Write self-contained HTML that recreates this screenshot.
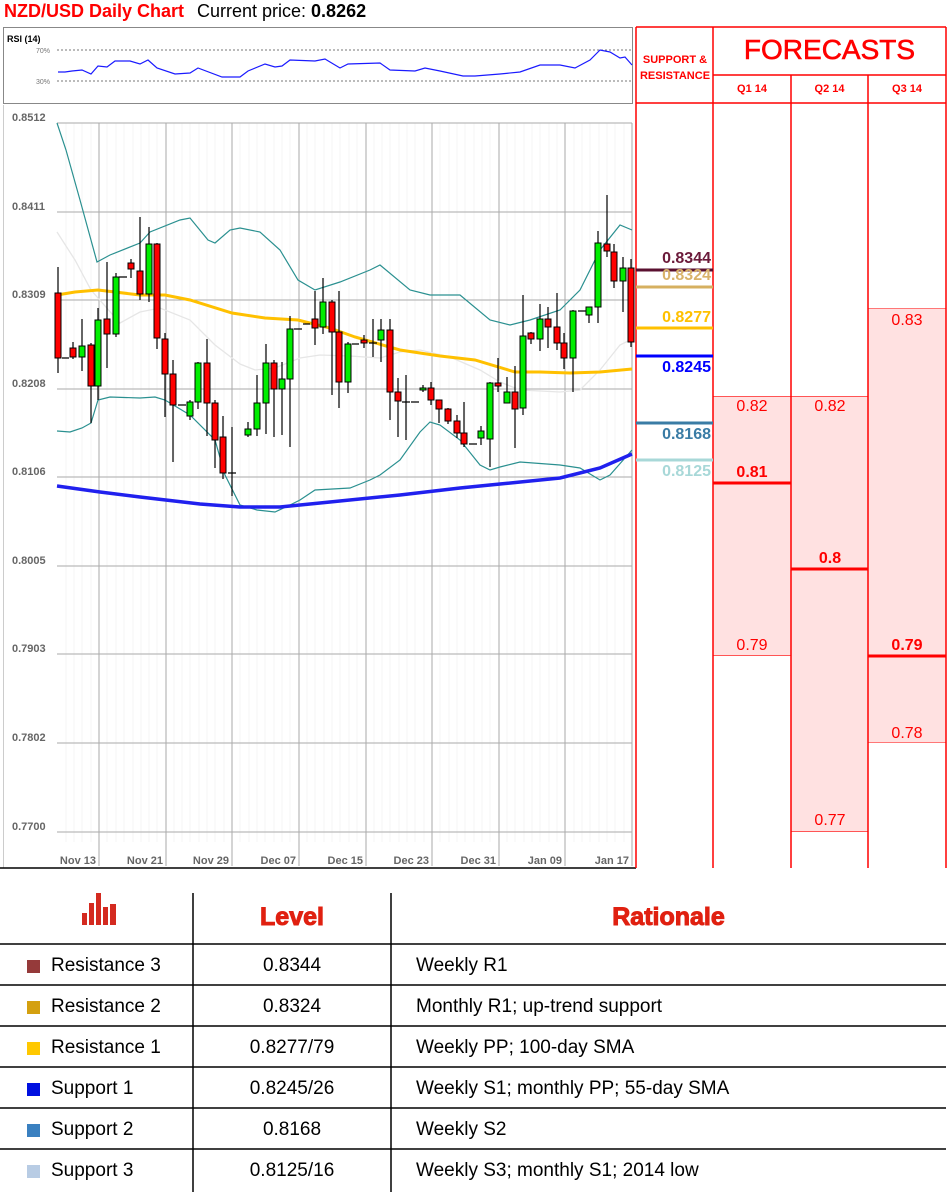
<!DOCTYPE html>
<html><head><meta charset="utf-8"><style>
*{margin:0;padding:0;box-sizing:border-box}
body{width:952px;height:1194px;background:#fff;position:relative;overflow:hidden;font-family:"Liberation Sans",sans-serif}
.a{position:absolute}
.hd{color:#ff0000;font-weight:bold;text-align:center}
.fc{position:absolute;color:#ff0000;font-size:16px;text-align:center;width:78px}
.b{font-weight:bold}
.sr{position:absolute;left:636px;width:75px;text-align:right;font-weight:bold;font-size:16px}
.row{position:absolute;left:0;width:946px;height:41px;font-size:19px;color:#000}
.row span{position:absolute;top:10px}
.sq{position:absolute;left:27px;top:15px;width:13px;height:13px}
</style></head><body>
<div class="a" style="left:4px;top:1px;font-size:18px;color:#ff0000;font-weight:bold">NZD/USD Daily Chart</div>
<div class="a" style="left:197px;top:1px;font-size:18px;color:#000">Current price: <b>0.8262</b></div>

<svg class="a" style="left:0;top:0" width="640" height="872" viewBox="0 0 640 872">
<rect x="3.5" y="27.5" width="629" height="76" fill="#fff" stroke="#888"/>
<text x="7" y="42" font-size="9" font-weight="bold" fill="#000">RSI (14)</text>
<text x="36" y="53" font-size="7" fill="#777">70%</text>
<text x="36" y="84" font-size="7" fill="#777">30%</text>
<line x1="57" y1="50" x2="632" y2="50" stroke="#777" stroke-dasharray="2,2"/>
<line x1="57" y1="81" x2="632" y2="81" stroke="#777" stroke-dasharray="2,2"/>
<polyline fill="none" stroke="#1a1aff" stroke-width="1.2" points="58,72 65,72 72,71 82,70 91,74 98,66 107,67 115,61 130,61 140,64 148,60 157,68 175,74 190,73 198,68 222,77 240,77 248,71 265,64 275,67 282,66 290,60 315,61 325,59 330,62 340,68 348,64 380,63 390,70 415,71 425,68 440,71 463,76 475,76 500,74 520,72 540,65 560,65 575,68 590,60 600,50 610,52 620,58 625,57 632,65"/>
<path d="M3.5 105V868" stroke="#ccc"/>
<g stroke="#f5f5f5">
<path d="M66 123V842M74 123V842M82 123V842M91 123V842M107 123V842M116 123V842M124 123V842M133 123V842M141 123V842M149 123V842M157 123V842M174 123V842M182 123V842M190 123V842M199 123V842M207 123V842M215 123V842M224 123V842M240 123V842M249 123V842M257 123V842M265 123V842M274 123V842M282 123V842M290 123V842M307 123V842M315 123V842M324 123V842M332 123V842M340 123V842M349 123V842M357 123V842M374 123V842M382 123V842M390 123V842M399 123V842M407 123V842M415 123V842M424 123V842M440 123V842M449 123V842M457 123V842M465 123V842M474 123V842M482 123V842M490 123V842M507 123V842M515 123V842M524 123V842M532 123V842M540 123V842M549 123V842M557 123V842M574 123V842M582 123V842M590 123V842M599 123V842M607 123V842M615 123V842M624 123V842"/>
</g>
<g stroke="#aaa" stroke-width="1">
<path d="M57 123H632M57 212H632M57 300H632M57 389H632M57 477H632M57 566H632M57 654H632M57 743H632M57 832H632"/>
<path d="M99 123V866M166 123V866M232 123V866M299 123V866M366 123V866M432 123V866M499 123V866M565 123V866M632 123V866"/>
</g>
<g font-size="11" fill="#666" font-weight="bold">
<text x="12" y="121">0.8512</text><text x="12" y="210">0.8411</text><text x="12" y="298">0.8309</text><text x="12" y="387">0.8208</text><text x="12" y="475">0.8106</text><text x="12" y="564">0.8005</text><text x="12" y="652">0.7903</text><text x="12" y="741">0.7802</text><text x="12" y="830">0.7700</text>
</g>
<g font-size="11" fill="#666" font-weight="bold" text-anchor="end">
<text x="96" y="864">Nov 13</text><text x="163" y="864">Nov 21</text><text x="229" y="864">Nov 29</text><text x="296" y="864">Dec 07</text><text x="363" y="864">Dec 15</text><text x="429" y="864">Dec 23</text><text x="496" y="864">Dec 31</text><text x="562" y="864">Jan 09</text><text x="629" y="864">Jan 17</text>
</g>
<line x1="0" y1="868" x2="636" y2="868" stroke="#000" stroke-width="1.5"/>
<polyline fill="none" stroke="#e6e6e6" stroke-width="1.3" points="57,232 75,260 91,290 120,323 140,312 160,308 190,320 215,345 240,364 255,370 275,368 300,358 320,355 350,356 380,358 400,352 420,350 450,357 480,370 500,382 520,390 560,392 580,390 600,370 620,345 632,339"/>
<polyline fill="none" stroke="#2a9090" stroke-width="1.2" points="57,123 66,150 80,200 97,262 110,255 140,243 150,232 180,220 190,218 208,240 215,243 230,230 240,228 260,232 280,250 298,280 315,290 340,282 370,270 380,265 410,290 430,295 460,295 490,320 510,325 530,320 560,310 580,290 600,250 620,225 632,230"/>
<polyline fill="none" stroke="#2a9090" stroke-width="1.2" points="57,431 70,432 82,428 91,423 98,400 110,397 140,398 155,397 165,400 190,415 215,440 225,475 240,505 257,510 275,512 290,505 300,500 315,490 350,488 370,480 380,475 400,460 420,432 430,422 440,425 460,440 480,465 490,470 500,467 520,462 560,465 580,468 600,480 610,475 632,450"/>
<polyline fill="none" stroke="#ffc000" stroke-width="3" points="57,295 75,292 98,290 140,295 165,295 190,300 232,313 265,318 298,320 330,328 355,337 400,350 440,356 475,360 515,372 540,372 570,373 600,372 632,369"/>
<polyline fill="none" stroke="#2020ee" stroke-width="3.5" points="57,486 100,492 140,497 200,504 240,507 280,507 330,502 400,495 460,488 500,484 560,478 600,468 632,454"/>
<path stroke="#000" stroke-width="1.2" fill="none" d="M58 267V373M73 342V359M82 319V371M91 343V423M98 308V400M107 262V368M116 273V337M131 259V278M140 217V300M149 227V302M157 243V349M165 333V417M173 360V462M190 400V420M198 362V409M207 339V436M215 400V468M223 416V479M232 427V496M248 422V437M257 375V436M266 344V434M274 360V437M282 362V435M290 316V447M315 291V345M323 278V334M332 300V395M339 291V408M348 342V393M364 335V348M373 319V357M381 319V362M390 319V420M398 378V437M406 375V440M423 385V392M431 382V405M439 400V423M448 408V424M457 415V438M464 402V447M481 426V445M490 382V467M498 358V392M507 377V403M515 366V448M523 295V415M531 332V344M540 304V351M548 307V348M557 293V350M564 333V369M573 310V392M589 307V323M598 231V323M607 195V257M614 244V288M623 257V312M631 259V347
M62 358H69M119 277H127M178 405H186M228 473H236M294 329H302M303 324H310M352 344H359M369 343H377M402 402H410M411 402H419M469 444H477M578 311H586"/>
<g stroke="#000" stroke-width="1">
<g fill="#ff0000">
<rect x="55" y="293" width="6" height="65"/><rect x="70" y="348" width="6" height="9"/><rect x="88" y="345" width="6" height="41"/><rect x="104" y="319" width="6" height="15"/><rect x="128" y="263" width="6" height="6"/><rect x="137" y="271" width="6" height="23"/><rect x="154" y="244" width="6" height="94"/><rect x="162" y="339" width="6" height="35"/><rect x="170" y="374" width="6" height="31"/><rect x="204" y="363" width="6" height="40"/><rect x="212" y="403" width="6" height="37"/><rect x="220" y="437" width="6" height="36"/><rect x="271" y="363" width="6" height="26"/><rect x="312" y="319" width="6" height="9"/><rect x="329" y="302" width="6" height="30"/><rect x="336" y="332" width="6" height="50"/><rect x="361" y="340" width="6" height="3"/><rect x="387" y="330" width="6" height="62"/><rect x="395" y="392" width="6" height="9"/><rect x="428" y="388" width="6" height="12"/><rect x="436" y="400" width="6" height="9"/><rect x="445" y="409" width="6" height="12"/><rect x="454" y="421" width="6" height="12"/><rect x="461" y="433" width="6" height="11"/><rect x="495" y="383" width="6" height="3"/><rect x="512" y="392" width="6" height="17"/><rect x="528" y="333" width="6" height="6"/><rect x="545" y="319" width="6" height="8"/><rect x="554" y="327" width="6" height="16"/><rect x="561" y="343" width="6" height="15"/><rect x="604" y="244" width="6" height="7"/><rect x="611" y="252" width="6" height="29"/><rect x="628" y="268" width="6" height="74"/>
</g>
<g fill="#00ee00">
<rect x="79" y="346" width="6" height="11"/><rect x="95" y="320" width="6" height="66"/><rect x="113" y="277" width="6" height="57"/><rect x="146" y="244" width="6" height="50"/><rect x="187" y="402" width="6" height="14"/><rect x="195" y="363" width="6" height="39"/><rect x="245" y="429" width="6" height="6"/><rect x="254" y="403" width="6" height="26"/><rect x="263" y="363" width="6" height="40"/><rect x="279" y="379" width="6" height="10"/><rect x="287" y="329" width="6" height="50"/><rect x="320" y="302" width="6" height="25"/><rect x="345" y="344" width="6" height="38"/><rect x="378" y="330" width="6" height="10"/><rect x="420" y="388" width="6" height="2"/><rect x="478" y="431" width="6" height="7"/><rect x="487" y="383" width="6" height="56"/><rect x="504" y="392" width="6" height="11"/><rect x="520" y="336" width="6" height="72"/><rect x="537" y="319" width="6" height="20"/><rect x="570" y="311" width="6" height="47"/><rect x="586" y="307" width="6" height="8"/><rect x="595" y="243" width="6" height="64"/><rect x="620" y="268" width="6" height="13"/>
</g>
</g>
</svg>

<div class="a" style="left:713px;top:396px;width:78px;height:260px;background:#ffe1e1;border-top:1px solid #f55;border-bottom:1px solid #f55"></div>
<div class="a" style="left:791px;top:396px;width:77px;height:436px;background:#ffe1e1;border-top:1px solid #f55;border-bottom:1px solid #f55"></div>
<div class="a" style="left:868px;top:308px;width:78px;height:435px;background:#ffe1e1;border-top:1px solid #f77;border-bottom:1px solid #f77"></div>
<svg class="a" style="left:634px;top:25px" width="316" height="846">
<g stroke="#ff0000" stroke-width="1.5" fill="none">
<path d="M2 2H312M79 50H312M2 78H312M2 2V843M79 2V843M157 50V843M234 50V843M312 2V843"/>
</g>
<g stroke="#ff0000" stroke-width="3"><path d="M79 458H157M157 544H234M234 631H312"/></g>
<line x1="2" y1="245" x2="79" y2="245" stroke="#5a1030" stroke-width="3"/>
<line x1="2" y1="262" x2="79" y2="262" stroke="#d6b060" stroke-width="3"/>
<line x1="2" y1="303" x2="79" y2="303" stroke="#ffc000" stroke-width="3"/>
<line x1="2" y1="331" x2="79" y2="331" stroke="#0000ff" stroke-width="3"/>
<line x1="2" y1="398" x2="79" y2="398" stroke="#3a7ca5" stroke-width="3"/>
<line x1="2" y1="435" x2="79" y2="435" stroke="#a8d8d8" stroke-width="3"/>
</svg>
<div class="a hd" style="left:713px;top:34px;width:233px;font-size:28px;font-weight:normal;-webkit-text-stroke:0.6px #f00">FORECASTS</div>
<div class="a hd" style="left:637px;top:52px;width:76px;font-size:11px;line-height:16px">SUPPORT &amp;<br>RESISTANCE</div>
<div class="a hd" style="left:713px;top:83px;width:78px;font-size:11px">Q1 14</div>
<div class="a hd" style="left:791px;top:83px;width:77px;font-size:11px">Q2 14</div>
<div class="a hd" style="left:868px;top:83px;width:78px;font-size:11px">Q3 14</div>

<div class="sr" style="top:250px;color:#6b1a3a">0.8344</div>
<div class="sr" style="top:267px;color:#d9b36a">0.8324</div>
<div class="sr" style="top:309px;color:#ffc000">0.8277</div>
<div class="sr" style="top:359px;color:#0000ff">0.8245</div>
<div class="sr" style="top:426px;color:#3a7ca5">0.8168</div>
<div class="sr" style="top:463px;color:#a8d8d8">0.8125</div>

<div class="fc" style="left:713px;top:398px">0.82</div>
<div class="fc b" style="left:713px;top:464px">0.81</div>
<div class="fc" style="left:713px;top:637px">0.79</div>
<div class="fc" style="left:791px;top:398px">0.82</div>
<div class="fc b" style="left:791px;top:550px">0.8</div>
<div class="fc" style="left:791px;top:812px">0.77</div>
<div class="fc" style="left:868px;top:312px">0.83</div>
<div class="fc b" style="left:868px;top:637px">0.79</div>
<div class="fc" style="left:868px;top:725px">0.78</div>

<svg class="a" style="left:0;top:890px" width="952" height="304">
<g stroke="#000" stroke-width="1.5">
<path d="M193 3V302M391 3V302M0 54H946M0 95H946M0 136H946M0 177H946M0 218H946M0 259H946"/>
</g>
<g fill="#d42a20"><rect x="82" y="23" width="5" height="12"/><rect x="89" y="13" width="5" height="22"/><rect x="96" y="3" width="5" height="32"/><rect x="103" y="17" width="5" height="18"/><rect x="110" y="14" width="6" height="21"/></g>
</svg>
<div class="a" style="left:193px;top:903px;width:198px;text-align:center;font-size:25px;font-weight:900;color:#e02010;-webkit-text-stroke:1px #e02010">Level</div>
<div class="a" style="left:391px;top:903px;width:555px;text-align:center;font-size:25px;font-weight:900;color:#e02010;-webkit-text-stroke:1px #e02010">Rationale</div>

<div class="row" style="top:945px"><div class="sq" style="background:#953a3a"></div><span style="left:51px">Resistance 3</span><span style="left:193px;width:198px;text-align:center">0.8344</span><span style="left:416px">Weekly R1</span></div>
<div class="row" style="top:986px"><div class="sq" style="background:#d4a010"></div><span style="left:51px">Resistance 2</span><span style="left:193px;width:198px;text-align:center">0.8324</span><span style="left:416px">Monthly R1; up-trend support</span></div>
<div class="row" style="top:1027px"><div class="sq" style="background:#ffc800"></div><span style="left:51px">Resistance 1</span><span style="left:193px;width:198px;text-align:center">0.8277/79</span><span style="left:416px">Weekly PP; 100-day SMA</span></div>
<div class="row" style="top:1068px"><div class="sq" style="background:#0010e0"></div><span style="left:51px">Support 1</span><span style="left:193px;width:198px;text-align:center">0.8245/26</span><span style="left:416px">Weekly S1; monthly PP; 55-day SMA</span></div>
<div class="row" style="top:1109px"><div class="sq" style="background:#3a80c0"></div><span style="left:51px">Support 2</span><span style="left:193px;width:198px;text-align:center">0.8168</span><span style="left:416px">Weekly S2</span></div>
<div class="row" style="top:1150px"><div class="sq" style="background:#b8cce4"></div><span style="left:51px">Support 3</span><span style="left:193px;width:198px;text-align:center">0.8125/16</span><span style="left:416px">Weekly S3; monthly S1; 2014 low</span></div>
</body></html>
